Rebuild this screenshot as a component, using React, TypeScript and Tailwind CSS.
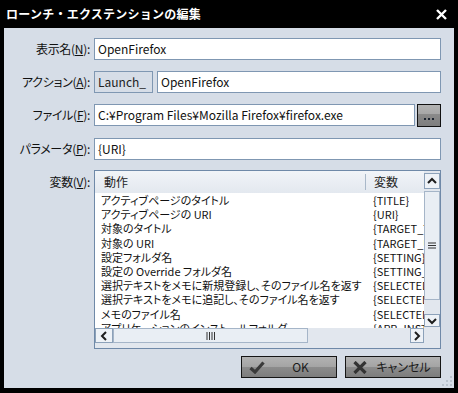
import React from "react";

const rows: [string, string][] = [
  ["アクティブページのタイトル", "{TITLE}"],
  ["アクティブページの URI", "{URI}"],
  ["対象のタイトル", "{TARGET_TITLE}"],
  ["対象の URI", "{TARGET_URI}"],
  ["設定フォルダ名", "{SETTING}"],
  ["設定の Override フォルダ名", "{SETTING_OVERRIDE}"],
  ["選択テキストをメモに新規登録し、そのファイル名を返す", "{SELECTED_NEW}"],
  ["選択テキストをメモに追記し、そのファイル名を返す", "{SELECTED_APPEND}"],
  ["メモのファイル名", "{SELECTED_FILE}"],
  ["アプリケーションのインストールフォルダ", "{APP_INSTALL}"],
];

function Label({ text, k }: { text: string; k: string }) {
  return (
    <div className="h-[22px] flex items-center justify-end text-[12px] leading-[14px] text-[#111] whitespace-nowrap tracking-[-0.3px]">
      {text}(<span className="underline">{k}</span>):
    </div>
  );
}

function Input({ value, className = "" }: { value: string; className?: string }) {
  return (
    <div
      className={
        "h-[22px] min-w-0 border border-[#7f97b2] bg-white pl-[3px] flex items-center text-[12px] leading-[14px] text-[#111] whitespace-nowrap overflow-hidden " +
        className
      }
    >
      {value}
    </div>
  );
}

function Chevron({ dir }: { dir: "up" | "down" | "left" | "right" }) {
  const d =
    dir === "up"
      ? "M1 6 L5 2 L9 6"
      : dir === "down"
      ? "M1 2 L5 6 L9 2"
      : dir === "left"
      ? "M6 1 L2 5 L6 9"
      : "M2 1 L6 5 L2 9";
  const w = dir === "up" || dir === "down" ? 10 : 8;
  const h = dir === "up" || dir === "down" ? 8 : 10;
  return (
    <svg width={w} height={h} viewBox={`0 0 ${w} ${h}`}>
      <path d={d} fill="none" stroke="#1e1e1e" strokeWidth="2" />
    </svg>
  );
}

export default function App() {
  return (
    <div className="w-[458px] h-[393px] bg-black flex flex-col font-['Noto_Sans_CJK_JP','Liberation_Sans',sans-serif] [font-feature-settings:'palt'] overflow-hidden">
      {/* title bar */}
      <div className="h-[28px] shrink-0 flex items-center justify-between pl-[6px] pr-[11px]">
        <span className="text-white font-bold text-[12px] tracking-[0.25px] leading-[14px] [font-feature-settings:normal]">
          ローンチ・エクステンションの編集
        </span>
        <svg width="11" height="11" viewBox="0 0 11 11">
          <path d="M1 1 L10 10 M10 1 L1 10" stroke="#fff" strokeWidth="2.4" />
        </svg>
      </div>

      {/* panel */}
      <div className="mx-[4px] mb-[5px] flex-1 min-h-0 bg-[#d6dde7] relative flex flex-col pt-[10px] pr-[13px]">
        <div className="grid grid-cols-[86px_minmax(0,1fr)] gap-x-[4px] gap-y-[11px]">
          <Label text="表示名" k="N" />
          <Input value="OpenFirefox" />

          <Label text="アクション" k="A" />
          <div className="flex gap-[4px] min-w-0">
            <div className="w-[59px] shrink-0 h-[22px] border border-[#7f97b2] pl-[3px] flex items-center text-[12px] leading-[14px] text-[#222]">
              Launch_
            </div>
            <Input value="OpenFirefox" className="flex-1" />
          </div>

          <Label text="ファイル" k="F" />
          <div className="flex gap-[2px] min-w-0">
            <Input value="C:¥Program Files¥Mozilla Firefox¥firefox.exe" className="flex-1" />
            <div className="w-[24px] shrink-0 h-[23px] border border-[#111] bg-[linear-gradient(#b3b3b3_0%,#a6a6a6_45%,#8a8a8a_45%,#7e7e7e_100%)] flex items-end justify-center pb-[6px] gap-[2px]">
              <span className="w-[2px] h-[2px] bg-[#1c2430]" />
              <span className="w-[2px] h-[2px] bg-[#1c2430]" />
              <span className="w-[2px] h-[2px] bg-[#1c2430]" />
            </div>
          </div>

          <Label text="パラメータ" k="P" />
          <Input value="{URI}" />
        </div>

        {/* variables */}
        <div className="grid grid-cols-[86px_minmax(0,1fr)] gap-x-[4px] mt-[10px]">
          <div className="pt-[5px] text-right text-[12px] leading-[14px] text-[#111] whitespace-nowrap tracking-[-0.3px]">
            変数(<span className="underline">V</span>):
          </div>
          <div className="h-[179px] min-w-0 border border-[#6f89a8] bg-[#e2e7ee] flex flex-col">
            <div className="flex h-[157px] min-w-0">
              <div className="flex-1 min-w-0 flex flex-col bg-white overflow-hidden">
                <div className="h-[22px] shrink-0 flex items-center bg-[linear-gradient(#f1f4f8,#e3e8ef)] text-[12px] leading-[14px] text-[#222]">
                  <div className="w-[270px] shrink-0 pl-[9px]">動作</div>
                  <div className="w-px shrink-0 h-[16px] bg-[#a9b8c9]" />
                  <div className="pl-[8px] whitespace-nowrap">変数</div>
                </div>
                <div className="flex flex-col text-[11px] leading-[14.2px] text-[#111]">
                  {rows.map(([a, b], i) => (
                    <div key={i} className="flex whitespace-nowrap min-w-0">
                      <div className="w-[271px] shrink-0 pl-[6px] overflow-hidden">{a}</div>
                      <div className="pl-[7px] min-w-0 overflow-hidden">{b}</div>
                    </div>
                  ))}
                </div>
              </div>
              {/* vertical scrollbar */}
              <div className="w-[16px] shrink-0 bg-[#e2e7ee] flex flex-col pt-[2px] pb-[1px]">
                <div className="h-[16px] shrink-0 border border-[#8ca1b9] bg-[#eef2f7] flex items-center justify-center">
                  <Chevron dir="up" />
                </div>
                <div className="mt-[2px] shrink-0 h-[109px] border border-[#a5b5c8] bg-[#e9eef4] flex items-center justify-center">
                  <svg width="8" height="7" viewBox="0 0 8 7">
                    <path d="M0 1 H8 M0 3.5 H8 M0 6 H8" stroke="#333" strokeWidth="1" />
                  </svg>
                </div>
                <div className="flex-1" />
                <div className="h-[13px] shrink-0 border border-[#8ca1b9] bg-[#eef2f7] flex items-center justify-center">
                  <Chevron dir="down" />
                </div>
              </div>
            </div>
            {/* horizontal scrollbar */}
            <div className="h-[15px] flex min-w-0">
              <div className="w-[18px] shrink-0 border border-[#8ca1b9] bg-[#eef2f7] flex items-center justify-center">
                <Chevron dir="left" />
              </div>
              <div className="w-[195px] shrink-0 border border-[#a5b5c8] bg-[#e9eef4] flex items-center justify-center">
                <svg width="9" height="8" viewBox="0 0 9 8">
                  <path d="M1 0 V8 M3.5 0 V8 M6 0 V8 M8.5 0 V8" stroke="#333" strokeWidth="1" />
                </svg>
              </div>
              <div className="flex-1" />
              <div className="w-[14px] shrink-0 border border-[#8ca1b9] bg-[#eef2f7] flex items-center justify-center">
                <Chevron dir="right" />
              </div>
              <div className="w-[16px] shrink-0" />
            </div>
          </div>
        </div>

        {/* buttons */}
        <div className="flex justify-end gap-[8px] mt-[7px]">
          <div className="w-[96px] h-[22px] border border-[#151515] bg-[linear-gradient(#b2b2b2_0%,#a4a4a4_50%,#8c8c8c_50%,#7d7d7d_100%)] flex items-center pl-[7px]">
            <svg width="16" height="13" viewBox="0 0 16 13">
              <path d="M1.5 7 L6 11 L14.5 1.5" fill="none" stroke="#3a3a3a" strokeWidth="3.2" />
            </svg>
            <span className="flex-1 text-center text-[12px] leading-[14px] text-[#1a1a1a]">OK</span>
          </div>
          <div className="w-[96px] h-[22px] border border-[#151515] bg-[linear-gradient(#b2b2b2_0%,#a4a4a4_50%,#8c8c8c_50%,#7d7d7d_100%)] flex items-center pl-[7px]">
            <svg width="14" height="13" viewBox="0 0 14 13">
              <path d="M1.5 1 L12.5 12 M12.5 1 L1.5 12" fill="none" stroke="#333" strokeWidth="3.2" />
            </svg>
            <span className="flex-1 text-center text-[12px] leading-[14px] text-[#1a1a1a]">キャンセル</span>
          </div>
        </div>

        {/* resize grip */}
        <svg className="absolute right-[2px] bottom-[2px]" width="10" height="10" viewBox="0 0 10 10">
          <rect x="8" y="0" width="2" height="2" fill="#b9c2cd" />
          <rect x="4" y="4" width="2" height="2" fill="#b9c2cd" />
          <rect x="8" y="4" width="2" height="2" fill="#b9c2cd" />
          <rect x="0" y="8" width="2" height="2" fill="#b9c2cd" />
          <rect x="4" y="8" width="2" height="2" fill="#b9c2cd" />
          <rect x="8" y="8" width="2" height="2" fill="#b9c2cd" />
        </svg>
      </div>
    </div>
  );
}
